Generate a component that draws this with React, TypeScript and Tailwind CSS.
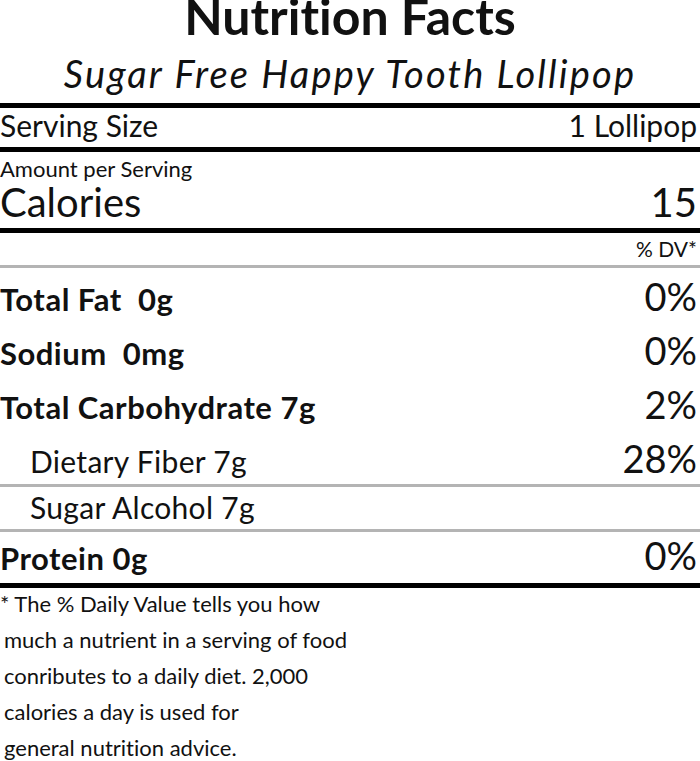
import React from "react";

const font = { fontFamily: "Lato, 'Open Sans', sans-serif" };

function Thick() {
  return <div className="h-[5px] w-full bg-black" />;
}
function Thin() {
  return <div className="h-[3px] w-full bg-[#b4b4b4]" />;
}

function NutRow({
  label,
  value,
  bold,
  indent,
}: {
  label: string;
  value?: string;
  bold?: boolean;
  indent?: boolean;
}) {
  return (
    <div className="flex h-[54px] items-baseline justify-between pt-[9px]">
      <span
        className={`whitespace-pre leading-none ${bold ? "text-[31px] font-bold tracking-[0.5px]" : "text-[30px] tracking-[0.3px]"} ${indent ? "pl-[30px]" : ""}`}
      >
        {label}
      </span>
      {value && <span className="pr-[3px] text-[38px] leading-none">{value}</span>}
    </div>
  );
}

export default function App() {
  return (
    <div
      className="h-[761px] w-[700px] overflow-hidden bg-white text-[#111] [font-variant-ligatures:none]"
      style={font}
    >
      <div className="flex h-[103px] flex-col items-center">
        <div className="mt-[-9px] h-[50px] text-[50px] font-bold leading-none">Nutrition Facts</div>
        <div className="mt-[13px] h-[38px] text-[38px] italic leading-none tracking-[2.2px]">
          Sugar Free Happy Tooth Lollipop
        </div>
      </div>
      <Thick />
      <div className="flex h-[39px] items-start justify-between pt-[2px]">
        <span className="text-[30px] leading-none">Serving Size</span>
        <span className="pr-[3px] text-[30px] leading-none">1 Lollipop</span>
      </div>
      <Thick />
      <div className="flex h-[76px] flex-col pt-[6px]">
        <div className="h-[22px] text-[22px] leading-none">Amount per Serving</div>
        <div className="mt-[2px] flex justify-between">
          <span className="text-[40px] leading-none">Calories</span>
          <span className="pr-[3px] text-[40px] leading-none">15</span>
        </div>
      </div>
      <Thick />
      <div className="flex h-[32px] justify-end pt-[5px]">
        <span className="pr-[3px] text-[21px] leading-none">% DV*</span>
      </div>
      <Thin />
      <NutRow label="Total Fat  0g" value="0%" bold />
      <NutRow label="Sodium  0mg" value="0%" bold />
      <NutRow label="Total Carbohydrate 7g" value="2%" bold />
      <NutRow label="Dietary Fiber 7g" value="28%" indent />
      <Thin />
      <div className="flex h-[42px] items-start pt-[5px]">
        <span className="pl-[30px] text-[30px] leading-none tracking-[0.3px]">Sugar Alcohol 7g</span>
      </div>
      <Thin />
      <div className="flex h-[51px] items-baseline justify-between pt-[4px]">
        <span className="text-[31px] font-bold leading-none tracking-[0.5px]">Protein 0g</span>
        <span className="pr-[3px] text-[38px] leading-none">0%</span>
      </div>
      <Thick />
      <div className="mt-[-2px] text-[22px] leading-[36px]">
        <div>* The % Daily Value tells you how</div>
        <div className="pl-[4px]">much a nutrient in a serving of food</div>
        <div className="pl-[4px]">conributes to a daily diet. 2,000</div>
        <div className="pl-[4px]">calories a day is used for</div>
        <div className="pl-[4px]">general nutrition advice.</div>
      </div>
    </div>
  );
}
